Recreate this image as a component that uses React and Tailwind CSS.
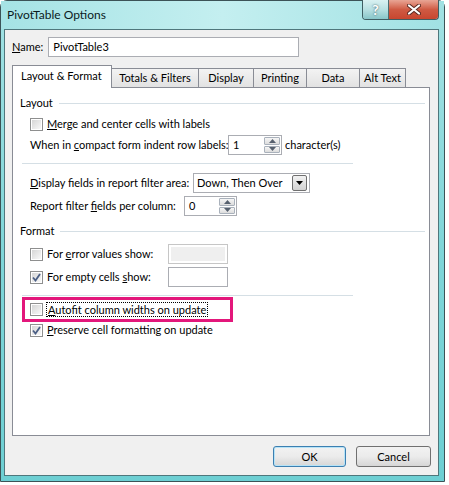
import React from "react";

const font = { fontFamily: 'Lato, "Liberation Sans", sans-serif' };

function Check({ checked }) {
  return (
    <span className="w-[13px] h-[13px] shrink-0 border border-[#8e8f8f] bg-white p-[1px] flex">
      <span className="flex-1 bg-linear-to-br from-[#d6d6d6] to-[#f8f8f8] flex items-center justify-center">
        {checked && (
          <svg width="9" height="9" viewBox="0 0 9 9">
            <path d="M1 4.5 L3.5 7.5 L8 1" fill="none" stroke="#4b5f85" strokeWidth="1.8" />
          </svg>
        )}
      </span>
    </span>
  );
}

function SpinBtn({ up }) {
  return (
    <span className="flex-1 border border-[#a9b1bb] rounded-[1px] bg-linear-to-b from-[#f6f6f6] to-[#dcdcdc] flex items-center justify-center">
      <svg width="7" height="4" viewBox="0 0 7 4">
        <path d={up ? "M0 4 L3.5 0 L7 4 Z" : "M0 0 L3.5 4 L7 0 Z"} fill="#56606e" />
      </svg>
    </span>
  );
}

function Spinner({ value, w }) {
  return (
    <div className={`${w} h-[20px] shrink-0 border border-[#abadb3] bg-white flex`}>
      <span className="flex-1 pl-[4px] leading-[18px]">{value}</span>
      <div className="w-[17px] flex flex-col gap-[1px] py-[1px] pr-[1px]">
        <SpinBtn up />
        <SpinBtn />
      </div>
    </div>
  );
}

function Header({ label }) {
  return (
    <div className="h-[16px] flex items-center pl-[7px] pr-[4px] gap-[6px]">
      <span className="leading-[16px]">{label}</span>
      <span className="flex-1 h-px bg-[#d5dfe5]" />
    </div>
  );
}

const tabs = ["Totals & Filters", "Display", "Printing", "Data", "Alt Text"];
const tabW = ["w-[87px]", "w-[55px]", "w-[53px]", "w-[53px]", "w-[46px]"];

export default function App() {
  return (
    <div className="w-[449px] h-[485px] bg-white overflow-hidden text-[11px] text-black whitespace-nowrap" style={font}>
      <div className="w-[445px] h-[482px] border border-[#3c5357] rounded-t-[7px] bg-linear-to-b from-[#a2e2e4] via-[#80d6d9] to-[#6dcfd3] flex flex-col">
        {/* Title bar */}
        <div className="h-[28px] flex items-start justify-between bg-linear-to-r from-[#a5e3e5] via-[#c4eff0] to-[#a0e1e3]">
          <span className="pl-[6px] pt-[6px] text-[12px] leading-[16px] text-[#0b1b1e]">PivotTable Options</span>
          <div className="flex -mt-px mr-[5px] border border-[#3f5e63] border-t-0 rounded-b-[4px] overflow-hidden">
            <span className="w-[26px] h-[19px] bg-linear-to-b from-[#d9f1f2] via-[#b8e0e2] to-[#88c6c9] flex items-center justify-center text-white font-bold text-[14px] leading-none border-r border-[#4c6d72]" style={{ textShadow: "0 0 2px #2c4a50" }}>
              ?
            </span>
            <span className="w-[49px] h-[19px] bg-linear-to-b from-[#e8a595] via-[#cf5a43] to-[#c8462f] flex items-center justify-center">
              <svg width="14" height="11" viewBox="0 0 14 11">
                <path d="M2 1.5 L12 9.5 M12 1.5 L2 9.5" stroke="#5a2a22" strokeWidth="4" strokeLinecap="round" />
                <path d="M2 1.5 L12 9.5 M12 1.5 L2 9.5" stroke="#ffffff" strokeWidth="2.2" strokeLinecap="round" />
              </svg>
            </span>
          </div>
        </div>

        {/* Client area */}
        <div className="ml-[3px] w-[435px] h-[447px] border border-[#4f777c] bg-[#f0f0f0] flex flex-col">
          <div className="mt-[7px] flex items-center pl-[7px] gap-[5px] h-[20px]">
            <span><span className="underline">N</span>ame:</span>
            <div className="w-[251px] h-[20px] border border-[#abadb3] bg-white pl-[4px] leading-[18px]">PivotTable3</div>
          </div>

          {/* Tabs */}
          <div className="mt-[8px] ml-[7px] h-[22px] flex items-end relative z-10">
            <div className="w-[100px] h-[23px] -mb-px border border-[#898c95] border-b-0 bg-white pl-[8px] leading-[20px]">
              Layout &amp; Format
            </div>
            {tabs.map((t, i) => (
              <div key={t} className={`${tabW[i]} h-[19px] border border-[#898c95] border-l-0 border-b-0 bg-linear-to-b from-[#f3f3f3] to-[#e2e2e2] text-center leading-[18px]`}>
                {t}
              </div>
            ))}
          </div>

          {/* Panel */}
          <div className="ml-[7px] w-[418px] h-[349px] border border-[#898c95] bg-white flex flex-col">
            <div className="mt-[7px]">
              <Header label="Layout" />
            </div>
            <div className="mt-[6px] h-[14px] pl-[17px] flex items-center gap-[4px]">
              <Check />
              <span><span className="underline">M</span>erge and center cells with labels</span>
            </div>
            <div className="mt-[4px] h-[20px] pl-[17px] flex items-center">
              <span className="w-[198px]">When in <span className="underline">c</span>ompact form indent row labels:</span>
              <Spinner value="1" w="w-[54px]" />
              <span className="ml-[3px]">character(s)</span>
            </div>
            <div className="mt-[8px] ml-[9px] w-[331px] h-px bg-[#d5dfe5]" />
            <div className="mt-[9px] h-[20px] pl-[17px] flex items-center">
              <span className="w-[163px]"><span className="underline">D</span>isplay fields in report filter area:</span>
              <div className="w-[117px] h-[20px] border border-[#abadb3] bg-white flex items-center">
                <span className="flex-1 pl-[3px] leading-[18px]">Down, Then Over</span>
                <span className="w-[15px] h-[16px] mr-[2px] border border-[#707070] rounded-[2px] bg-linear-to-b from-[#f2f2f2] to-[#d2d2d2] flex items-center justify-center">
                  <svg width="7" height="4" viewBox="0 0 7 4">
                    <path d="M0 0 L3.5 4 L7 0 Z" fill="#000" />
                  </svg>
                </span>
              </div>
            </div>
            <div className="mt-[3px] h-[20px] pl-[17px] flex items-center">
              <span className="w-[154px]">Report filter <span className="underline">f</span>ields per column:</span>
              <Spinner value="0" w="w-[53px]" />
            </div>
            <div className="mt-[7px]">
              <Header label="Format" />
            </div>
            <div className="mt-[5px] h-[20px] pl-[17px] flex items-center">
              <Check />
              <span className="ml-[4px] w-[121px]">For <span className="underline">e</span>rror values show:</span>
              <div className="w-[60px] h-[20px] border border-[#c6c6c6] bg-white p-[2px]">
                <div className="w-full h-full bg-[#efefef]" />
              </div>
            </div>
            <div className="mt-[3px] h-[20px] pl-[17px] flex items-center">
              <Check checked />
              <span className="ml-[4px] w-[121px]">For empty cells <span className="underline">s</span>how:</span>
              <div className="w-[60px] h-[20px] border border-[#abadb3] bg-white" />
            </div>
            <div className="mt-[8px] ml-[9px] w-[331px] h-px bg-[#d5dfe5]" />
            <div className="mt-px ml-[9px] w-[211px] h-[25px] border-[3px] border-[#e3177b] flex items-center pl-[5px] gap-[3px]">
              <Check />
              <span className="border border-dotted border-black px-px leading-[13px]">
                <span className="underline">A</span>utofit column widths on update
              </span>
            </div>
            <div className="mt-px h-[14px] pl-[17px] flex items-center gap-[4px]">
              <Check checked />
              <span><span className="underline">P</span>reserve cell formatting on update</span>
            </div>
          </div>

          {/* Buttons */}
          <div className="mt-[10px] flex justify-end gap-[10px] pr-[7px]">
            <button className="w-[73px] h-[21px] rounded-[3px] border border-[#3c7fb1] bg-linear-to-b from-[#f2f2f2] via-[#ebebeb] to-[#d6d6d6] shadow-[inset_0_0_0_1px_#b6e3f7] leading-[18px]">
              OK
            </button>
            <button className="w-[75px] h-[21px] rounded-[3px] border border-[#707070] bg-linear-to-b from-[#f2f2f2] via-[#ebebeb] to-[#d6d6d6] leading-[18px]">
              Cancel
            </button>
          </div>
        </div>
      </div>
    </div>
  );
}
